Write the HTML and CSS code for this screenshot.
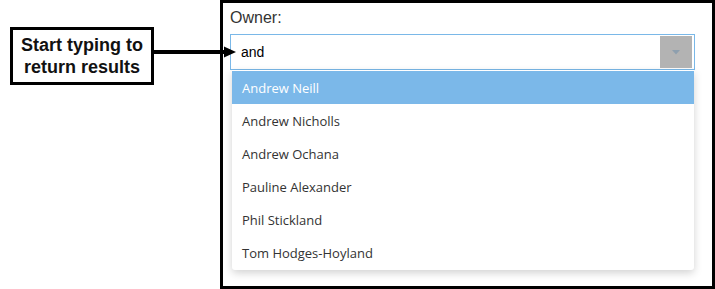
FILE: index.html
```html
<!DOCTYPE html>
<html lang="en">
<head>
  <meta charset="UTF-8" />
  <title>Owner lookup</title>
  <link rel="stylesheet" href="styles.css">
</head>
<body>
  <div class="page">
    <div class="callout-col">
      <div class="callout">Start typing to<br>return results</div>
    </div>
    <div class="frame">
      <label class="field-label">Owner:</label>
      <div class="combo">
        <div class="combo-text">and</div>
        <div class="combo-btn">
          <svg width="8" height="5" viewBox="0 0 8 5"><path d="M0 0 H8 L4 4.5 Z" fill="#8e9fae"/></svg>
        </div>
      </div>
      <ul class="results">
        <li class="active">Andrew Neill</li>
        <li>Andrew Nicholls</li>
        <li>Andrew Ochana</li>
        <li>Pauline Alexander</li>
        <li>Phil Stickland</li>
        <li>Tom Hodges-Hoyland</li>
      </ul>
    </div>
    <!-- annotation arrow sits over the frame border -->
    <svg class="arrow" width="84" height="12" viewBox="0 0 84 12">
      <rect x="0" y="4" width="72" height="4" fill="#000"/>
      <path d="M70 0.5 L82 6 L70 11.5 Z" fill="#000"/>
    </svg>
  </div>
</body>
</html>
```

FILE: styles.css
```css
body {
  margin: 0;
  background: #fff;
}
.page {
  position: relative;
  display: flex;
  width: 715px;
  height: 289px;
}
.callout-col {
  width: 220px;
  padding: 27px 0 0 10px;
  box-sizing: border-box;
}
.callout {
  width: 144px;
  height: 58px;
  box-sizing: border-box;
  border: 3px solid #000;
  font-family: "Liberation Sans", Arial, sans-serif;
  font-weight: bold;
  font-size: 18px;
  line-height: 22px;
  text-align: center;
  padding-top: 4px;
  color: #111;
}
.frame {
  width: 495px;
  height: 289px;
  box-sizing: border-box;
  border: 3px solid #000;
  padding: 5px 17px 0 7px;
  font-family: "Liberation Sans", Arial, sans-serif;
}
.field-label {
  display: block;
  font-size: 16px;
  line-height: 20px;
  color: #333;
  margin-bottom: 6px;
}
.combo {
  display: flex;
  align-items: center;
  justify-content: space-between;
  height: 36px;
  box-sizing: border-box;
  border: 1px solid #7ab8e8;
  padding: 0 2px 0 10px;
}
.combo-text {
  font-size: 14px;
  color: #000;
}
.combo-btn {
  width: 32px;
  height: 32px;
  background: #b3b3b3;
  display: flex;
  align-items: center;
  justify-content: center;
}
.results {
  list-style: none;
  margin: 0 1px 0 2px;
  padding: 1px 0;
  background: #fff;
  box-shadow: 0 3px 8px rgba(0, 0, 0, 0.18);
  border-radius: 0 0 3px 3px;
  font-family: "Open Sans", "Noto Sans", sans-serif;
  font-size: 13px;
  color: #333;
}
.results li {
  height: 33px;
  box-sizing: border-box;
  padding: 2px 0 0 10px;
  line-height: 31px;
}
.results li.active {
  background: #7bb8e9;
  color: #fff;
}
.arrow {
  position: absolute;
  left: 154px;
  top: 46px;
}
```
